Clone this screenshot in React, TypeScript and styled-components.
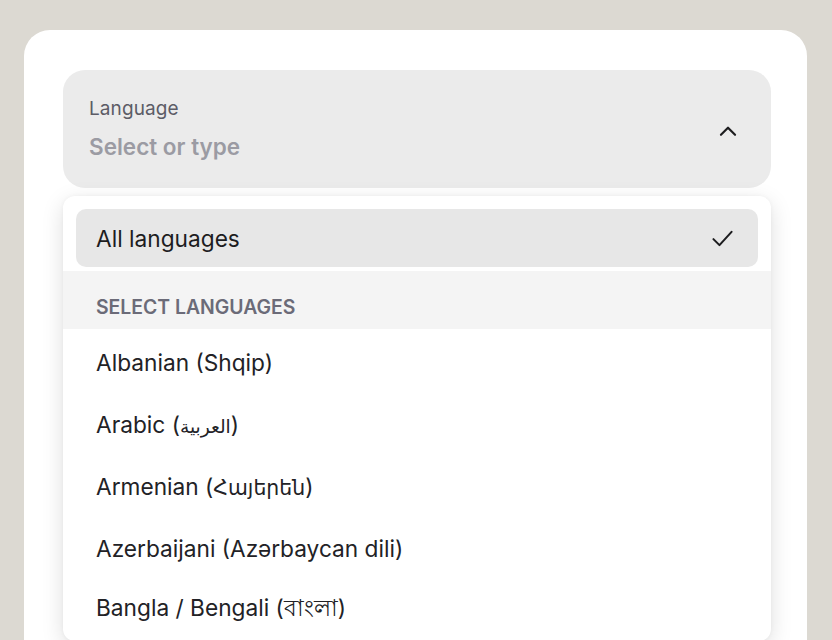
import React from "react";
import styled, { createGlobalStyle } from "styled-components";

const Global = createGlobalStyle`
  html, body { margin: 0; padding: 0; background: #dcd9d2; }
  body { font-family: Inter, "Noto Sans", "DejaVu Sans", sans-serif; -webkit-font-smoothing: antialiased; }
  * { box-sizing: border-box; }
`;

const Page = styled.div`
  padding: 30px 25px 0 24px;
  height: 640px;
  overflow: hidden;
`;

const Card = styled.div`
  background: #ffffff;
  border-radius: 26px;
  padding: 40px 36px 40px 39px;
  min-height: 700px;
`;

const Field = styled.div`
  display: flex;
  align-items: center;
  justify-content: space-between;
  background: #ebebeb;
  border-radius: 22px;
  height: 118px;
  padding: 27px 30px 27px 26px;
`;

const FieldText = styled.div`
  display: flex;
  flex-direction: column;
  gap: 12px;
`;

const ChevronWrap = styled.div`
  display: flex;
  padding-top: 3px;
`;

const Label = styled.div`
  font-size: 19px;
  line-height: 24px;
  color: #5c5c66;
  letter-spacing: 0.1px;
`;

const Placeholder = styled.div`
  font-size: 22.5px;
  line-height: 28px;
  font-weight: 600;
  color: #9b9ba3;
`;

const Menu = styled.div`
  margin-top: 8px;
  background: #ffffff;
  border-radius: 12px;
  padding-top: 13px;
  box-shadow: 0 6px 22px rgba(0, 0, 0, 0.13), 0 0 4px rgba(0, 0, 0, 0.04);
  overflow: hidden;
`;

const Selected = styled.div`
  margin: 0 13px;
  height: 58px;
  border-radius: 10px;
  background: #e7e7e7;
  display: flex;
  align-items: center;
  justify-content: space-between;
  padding: 0 21px 0 20px;
  font-size: 22.7px;
  color: #1d1d1f;
`;

const SectionHeader = styled.div`
  margin-top: 4px;
  height: 58px;
  background: #f4f4f4;
  display: flex;
  align-items: center;
  padding: 14px 0 0 33px;
  font-size: 19.4px;
  font-weight: 600;
  color: #6b6b78;
  text-transform: uppercase;
`;

const Option = styled.div`
  height: 62px;
  display: flex;
  align-items: center;
  padding-left: 33px;
  font-size: 22.7px;
  color: #222226;
`;

const Native = styled.span<{ $scale: number }>`
  font-size: ${(p) => p.$scale}em;
`;

const List = styled.div`
  padding-top: 2px;
`;

const ChevronUp = () => (
  <svg width="26" height="26" viewBox="0 0 24 24" fill="none" stroke="#1d1d1f" strokeWidth="2" strokeLinecap="round" strokeLinejoin="round">
    <path d="M5.5 15.5l6.5-6.5 6.5 6.5" />
  </svg>
);

const Check = () => (
  <svg width="29" height="29" viewBox="0 0 24 24" fill="none" stroke="#1d1d1f" strokeWidth="1.7" strokeLinecap="round" strokeLinejoin="round">
    <path d="M4.5 12.5l5 5 10-11" />
  </svg>
);

const languages: { name: string; native?: string; scale?: number }[] = [
  { name: "Albanian (Shqip)" },
  { name: "Arabic (", native: "العربية", scale: 0.82 },
  { name: "Armenian (", native: "Հայերեն", scale: 0.9 },
  { name: "Azerbaijani (Azərbaycan dili)" },
  { name: "Bangla / Bengali (", native: "বাংলা", scale: 1 },
];

export default function App() {
  return (
    <>
      <Global />
      <Page>
        <Card>
          <Field>
            <FieldText>
              <Label>Language</Label>
              <Placeholder>Select or type</Placeholder>
            </FieldText>
            <ChevronWrap>
              <ChevronUp />
            </ChevronWrap>
          </Field>
          <Menu>
            <Selected>
              <span>All languages</span>
              <Check />
            </Selected>
            <SectionHeader>Select languages</SectionHeader>
            <List>
              {languages.map((l) => (
                <Option key={l.name}>
                  {l.native ? (
                    <span>
                      {l.name}
                      <Native $scale={l.scale ?? 1}>{l.native}</Native>)
                    </span>
                  ) : (
                    l.name
                  )}
                </Option>
              ))}
            </List>
          </Menu>
        </Card>
      </Page>
    </>
  );
}
